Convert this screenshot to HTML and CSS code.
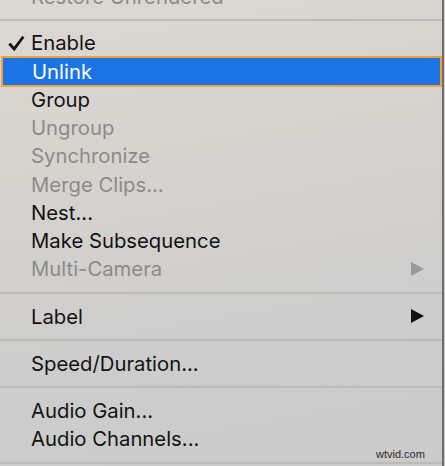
FILE: index.html
```html
<!DOCTYPE html>
<html>
<head>
<meta charset="utf-8">
<link rel="stylesheet" href="styles.css">
</head>
<body>
<div class="screen">
  <div class="menu">
    <div class="item disabled"><span class="label">Restore Unrendered</span></div>
    <div class="sep first"></div>
    <div class="item"><svg class="check" width="18" height="17" viewBox="0 0 18 17"><path d="M1.2 9.6 L3.6 7.8 L7 11.8 L15.4 0.8 L17.4 2.5 L7.3 16.2 Z"/></svg><span class="label">Enable</span></div>
    <div class="item active"><span class="label">Unlink</span></div>
    <div class="item"><span class="label">Group</span></div>
    <div class="item disabled"><span class="label">Ungroup</span></div>
    <div class="item disabled"><span class="label">Synchronize</span></div>
    <div class="item disabled"><span class="label">Merge Clips...</span></div>
    <div class="item"><span class="label">Nest...</span></div>
    <div class="item"><span class="label">Make Subsequence</span></div>
    <div class="item disabled"><span class="label">Multi-Camera</span>
      <svg class="arrow" width="13" height="14" viewBox="0 0 13 14"><path d="M0 0 L13 7 L0 14 Z"/></svg></div>
    <div class="sep"></div>
    <div class="item"><span class="label">Label</span>
      <svg class="arrow" width="13" height="14" viewBox="0 0 13 14"><path d="M0 0 L13 7 L0 14 Z"/></svg></div>
    <div class="sep"></div>
    <div class="item"><span class="label">Speed/Duration...</span></div>
    <div class="sep"></div>
    <div class="item"><span class="label">Audio Gain...</span></div>
    <div class="item"><span class="label">Audio Channels...</span></div>
    <div class="sep"></div>
  </div>
  <div class="edge"></div>
</div>
<div class="watermark">wtvid.com</div>
</body>
</html>
```
FILE: styles.css
```css
html, body {
  margin: 0;
  padding: 0;
  width: 445px;
  height: 466px;
  overflow: hidden;
}
body {
  background: #cfcecd;
  font-family: Inter, "Liberation Sans", sans-serif;
  position: relative;
}
.screen {
  display: flex;
  height: 466px;
  background: linear-gradient(170deg, #dcd8d3 0%, #d6d3cf 35%, #cdcdcd 70%, #cbcbcb 100%);
}
.menu {
  flex: 1;
  display: flex;
  flex-direction: column;
  margin-top: -17.5px;
}
.edge {
  width: 2px;
  background: #6e6d6b;
  margin-right: 1px;
}
.item {
  height: 28.25px;
  flex-shrink: 0;
  display: flex;
  align-items: center;
  position: relative;
  padding-left: 31px;
  padding-right: 18px;
  font-size: 20.3px;
  color: #121212;
  box-sizing: border-box;
}
.item .label {
  flex: 1;
  white-space: nowrap;
}
.item.disabled {
  color: #8c8b8a;
}
.item.active {
  background: #1c74e4;
  color: #ffffff;
  border: 2px solid #f1a238;
  padding-left: 29px;
  margin: 0 0 0 1px;
  height: 31px;
  margin-top: -1.4px;
  margin-bottom: -1.35px;
}
.check {
  position: absolute;
  left: 7px;
  top: 6px;
  fill: #121212;
}
.arrow {
  fill: currentColor;
  flex-shrink: 0;
}
.item.disabled .arrow {
  fill: #9a9998;
}
.sep {
  height: 2px;
  flex-shrink: 0;
  background: #bdbbb8;
  margin: 8.5px 0;
}
.sep.first {
  margin: 8px 0 8px;
}
.watermark {
  position: absolute;
  left: 376px;
  top: 448px;
  font-family: "Liberation Sans", sans-serif;
  font-size: 11px;
  color: #2a2a2a;
}
```
